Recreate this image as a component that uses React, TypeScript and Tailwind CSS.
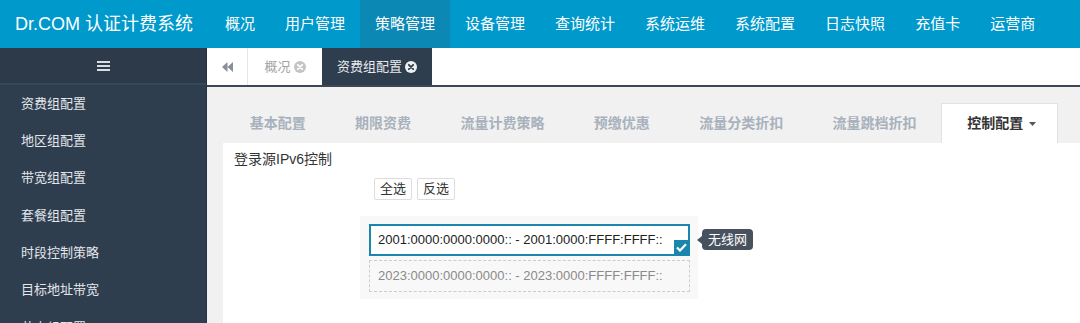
import React from "react";

const F = { fontFamily: '"Liberation Sans", "Noto Sans CJK SC", sans-serif' };

const navItems = ["概况", "用户管理", "策略管理", "设备管理", "查询统计", "系统运维", "系统配置", "日志快照", "充值卡", "运营商"];
const sideItems = ["资费组配置", "地区组配置", "带宽组配置", "套餐组配置", "时段控制策略", "目标地址带宽", "节点组配置"];
const tabs = ["基本配置", "期限资费", "流量计费策略", "预缴优惠", "流量分类折扣", "流量跳档折扣"];

function CloseCircle({ bg, fg }: { bg: string; fg: string }) {
  return (
    <svg width="12" height="12" viewBox="0 0 12 12" className="ml-[3px]">
      <circle cx="6" cy="6" r="6" fill={bg} />
      <path d="M3.8 3.8 L8.2 8.2 M8.2 3.8 L3.8 8.2" stroke={fg} strokeWidth="1.8" strokeLinecap="round" />
    </svg>
  );
}

export default function App() {
  return (
    <div className="w-[1080px] h-[323px] overflow-hidden flex flex-col bg-white" style={F}>
      <header className="h-[48px] bg-[#0099cc] flex items-stretch shrink-0">
        <div className="w-[210px] pl-[15px] flex items-center text-white text-[18px] whitespace-nowrap">Dr.COM 认证计费系统</div>
        <nav className="flex items-stretch">
          {navItems.map((n) => (
            <div
              key={n}
              className={`px-[15px] flex items-center text-[15px] text-white whitespace-nowrap ${n === "策略管理" ? "bg-[#0b88b4]" : ""}`}
            >
              {n}
            </div>
          ))}
        </nav>
      </header>
      <div className="flex flex-1 min-h-0">
        <aside className="w-[207px] shrink-0 bg-[#2f3e4f] flex flex-col border-r border-[#27323f] overflow-hidden">
          <div className="h-[37px] shrink-0 bg-[#2c3a4a] border-b-2 border-[#35475a] flex items-center justify-center">
            <div className="flex flex-col gap-[2px]">
              <div className="w-[13px] h-[2px] bg-[#d9dde3]" />
              <div className="w-[13px] h-[2px] bg-[#d9dde3]" />
              <div className="w-[13px] h-[2px] bg-[#d9dde3]" />
            </div>
          </div>
          {sideItems.map((s) => (
            <div key={s} className="h-[37.3px] shrink-0 pl-[21px] flex items-center text-[13px] text-[#e3e6ea]">
              {s}
            </div>
          ))}
        </aside>
        <main className="flex-1 flex flex-col min-w-0">
          <div className="h-[39px] shrink-0 bg-white border-b-2 border-[#3a4858] flex items-stretch">
            <div className="w-[41px] flex items-center justify-center text-[#8a8f96] border-r border-[#e6e6e6]">
              <svg width="11" height="10" viewBox="0 0 11 10">
                <path d="M5.5 0 L0 5 L5.5 10 Z M11 0 L5.5 5 L11 10 Z" fill="#8a8f96" />
              </svg>
            </div>
            <div className="w-[74px] flex items-center justify-center text-[13px] text-[#a3a3a3]">
              概况
              <CloseCircle bg="#c4c4c4" fg="#ffffff" />
            </div>
            <div className="w-[110px] bg-[#2f3e4f] flex items-center justify-center text-[13px] text-[#e8eaed]">
              资费组配置
              <CloseCircle bg="#eef0f2" fg="#2f3e4f" />
            </div>
          </div>
          <div className="flex-1 bg-[#f1f1f1] pl-[16px] pt-[16px] flex flex-col min-h-0">
            <div className="h-[40px] shrink-0 flex items-stretch pl-[2px]">
              {tabs.map((t) => (
                <div key={t} className="px-[24.7px] flex items-center text-[14px] font-bold text-[#a8b1bc]">
                  {t}
                </div>
              ))}
              <div className="bg-white border border-b-0 border-[#e2e2e2] pl-[25px] pr-[21px] flex items-center text-[14px] font-bold text-[#333]">
                控制配置
                <svg width="7" height="4" viewBox="0 0 7 4" className="ml-[6px]">
                  <path d="M0 0 L7 0 L3.5 4 Z" fill="#555" />
                </svg>
              </div>
            </div>
            <div className="flex-1 bg-white flex flex-col">
              <div className="h-[28px] pl-[11px] pt-[6px] text-[14px] text-[#333] leading-[20px]">登录源IPv6控制</div>
              <div className="mt-[7px] ml-[151px] flex gap-[5px]">
                <button className="h-[22px] px-[5px] bg-white border border-[#dddddd] rounded-[2px] text-[13px] text-[#333] leading-[20px]">全选</button>
                <button className="h-[22px] px-[5px] bg-white border border-[#dddddd] rounded-[2px] text-[13px] text-[#333] leading-[20px]">反选</button>
              </div>
              <div className="mt-[16px] ml-[137px] w-[338px] h-[83px] bg-[#f8f8f8] pt-[8px] pl-[9px] flex flex-col gap-[4px]">
                <div className="relative w-[321px] h-[32px] border-2 border-[#1b86ad] bg-white pl-[7px] flex items-center text-[13px] text-[#222] whitespace-nowrap">
                  2001:0000:0000:0000:: - 2001:0000:FFFF:FFFF::
                  <div className="absolute right-[-1px] bottom-[-1px] w-[15px] h-[15px] bg-[#1b86ad] flex items-center justify-center">
                    <svg width="11" height="9" viewBox="0 0 11 9">
                      <path d="M1 4.5 L4 7.5 L10 1.2" stroke="#fff" strokeWidth="2.2" fill="none" />
                    </svg>
                  </div>
                  <div className="absolute left-[326px] top-[3px] flex items-center">
                    <div className="w-0 h-0 border-y-[4px] border-y-transparent border-r-[5px] border-r-[#48525f]" />
                    <div className="h-[21px] px-[6px] bg-[#48525f] rounded-[4px] text-white text-[13px] flex items-center">无线网</div>
                  </div>
                </div>
                <div className="w-[321px] h-[32px] border border-dashed border-[#cccccc] pl-[8px] flex items-center text-[13px] text-[#8a8a8a] whitespace-nowrap">
                  2023:0000:0000:0000:: - 2023:0000:FFFF:FFFF::
                </div>
              </div>
            </div>
          </div>
        </main>
      </div>
    </div>
  );
}
